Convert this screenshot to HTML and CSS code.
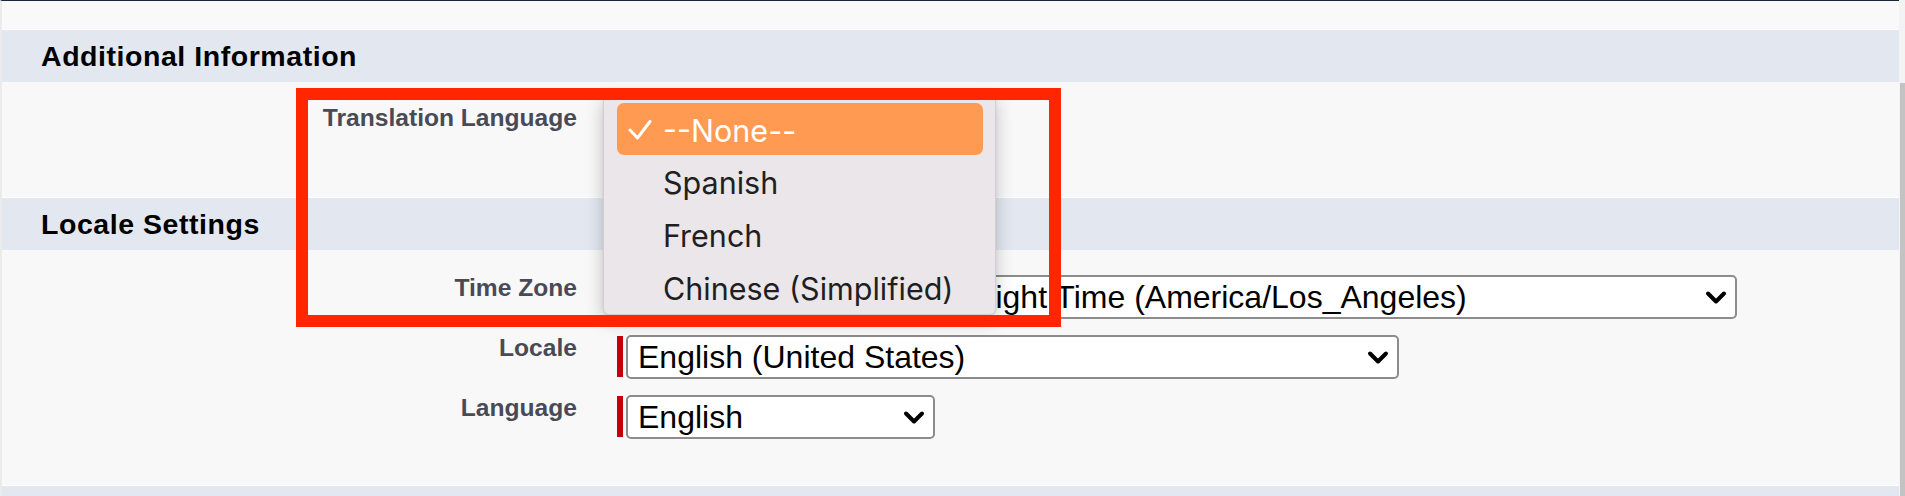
FILE: index.html
```html
<!DOCTYPE html>
<html lang="en">
<head>
<meta charset="utf-8">
<title>User Settings</title>
<link rel="stylesheet" href="styles.css">
</head>
<body>
<div class="page">
  <div class="frame">
    <div class="top-gap"></div>

    <section class="section">
      <h3 class="band">Additional Information</h3>
      <div class="rows rows-first">
        <div class="row">
          <div class="label">Translation Language</div>
          <div class="field"></div>
        </div>
      </div>
    </section>

    <section class="section">
      <h3 class="band">Locale Settings</h3>
      <div class="rows rows-locale">
        <div class="row">
          <div class="label">Time Zone</div>
          <div class="field">
            <span class="req"></span>
            <div class="select w-tz">
              <span class="value">(GMT-07:00) Pacific Daylight Time (America/Los_Angeles)</span>
              <svg class="chev" viewBox="0 0 22 15" aria-hidden="true"><path d="M3 3.5 L11 11.5 L19 3.5"/></svg>
            </div>
          </div>
        </div>
        <div class="row">
          <div class="label">Locale</div>
          <div class="field">
            <span class="req"></span>
            <div class="select w-locale">
              <span class="value">English (United States)</span>
              <svg class="chev" viewBox="0 0 22 15" aria-hidden="true"><path d="M3 3.5 L11 11.5 L19 3.5"/></svg>
            </div>
          </div>
        </div>
        <div class="row">
          <div class="label">Language</div>
          <div class="field">
            <span class="req"></span>
            <div class="select w-lang">
              <span class="value">English</span>
              <svg class="chev" viewBox="0 0 22 15" aria-hidden="true"><path d="M3 3.5 L11 11.5 L19 3.5"/></svg>
            </div>
          </div>
        </div>
      </div>
    </section>

    <div class="band band-next"></div>
  </div>
  <div class="edge">
    <div class="edge-top"></div>
    <div class="edge-track"></div>
  </div>
</div>

<div class="menu">
  <div class="item selected">
    <svg class="check" viewBox="0 0 24 20" aria-hidden="true"><path d="M2 10 L9.5 18 L22 1.5"/></svg>
    --None--
  </div>
  <div class="item">Spanish</div>
  <div class="item">French</div>
  <div class="item">Chinese (Simplified)</div>
</div>

<div class="callout"></div>
</body>
</html>
```

FILE: styles.css
```css
* { box-sizing: border-box; }

html, body {
  margin: 0;
  padding: 0;
  height: 100%;
}

body {
  background: #f8f8f8;
  font-family: "Liberation Sans", Arial, sans-serif;
  overflow: hidden;
}

.page {
  display: flex;
  height: 496px;
}

.frame {
  flex: 1;
  border-top: 1px solid #1b2738;
  border-left: 2px solid #ebebeb;
  background: #f8f8f8;
  display: flex;
  flex-direction: column;
}

.top-gap {
  height: 28px;
  background: #f9f9f9;
}

.band {
  margin: 0;
  height: 53px;
  border-top: 1px solid #fdfdfe;
  background: #e3e7f0;
  color: #000;
  font-size: 28.5px;
  letter-spacing: 0.55px;
  font-weight: bold;
  line-height: 52px;
  padding-left: 39px;
}

.band-next {
  flex: 1;
  margin-top: 0;
}

.rows {
  display: flex;
  flex-direction: column;
  gap: 16px;
}

.rows-first {
  height: 115px;
  padding-top: 23px;
}

.rows-locale {
  height: 235px;
  padding-top: 25px;
}

.row {
  display: grid;
  grid-template-columns: 575px 1fr;
  column-gap: 40px;
  align-items: start;
}

.label {
  text-align: right;
  color: #4a4a56;
  font-weight: bold;
  font-size: 24.6px;
  line-height: 26px;
}

.field {
  display: flex;
  gap: 3px;
  align-items: flex-start;
}

.req {
  width: 6px;
  height: 41px;
  margin-top: 1px;
  background: #c5000b;
  flex: none;
}

.select {
  height: 44px;
  border: 2px solid #8c8c8c;
  border-radius: 5px;
  background: #fff;
  display: flex;
  align-items: center;
  justify-content: space-between;
  padding: 0 8px 0 10px;
  color: #000;
  font-size: 32px;
  line-height: 40px;
  white-space: nowrap;
  overflow: hidden;
}

.select .value {
  padding-bottom: 1px;
}

.w-tz { width: 1111px; }
.w-locale { width: 773px; }
.w-lang { width: 309px; }

.chev {
  width: 22px;
  height: 15px;
  flex: none;
  fill: none;
  stroke: #000;
  stroke-width: 4;
  stroke-linecap: round;
  stroke-linejoin: round;
}

.edge {
  width: 6px;
  display: flex;
  flex-direction: column;
}

.edge-top {
  height: 83px;
  background: #f3f3f3;
}

.edge-track {
  flex: 1;
  border-left: 1px solid #f3f3f3;
  background: #c3c3c3;
}

/* open native dropdown list (overlay) */
.menu {
  position: absolute;
  left: 603px;
  top: 94px;
  width: 393px;
  height: 221px;
  padding: 8px 12px 0 13px;
  background: #eae6e9;
  border: 1px solid rgba(0, 0, 0, 0.10);
  border-radius: 6px;
  box-shadow: 0 6px 18px rgba(0, 0, 0, 0.22), 0 0 3px rgba(0, 0, 0, 0.08);
  font-family: Inter, "Liberation Sans", sans-serif;
  font-size: 30.5px;
  color: #1f1f1f;
}

.item {
  position: relative;
  height: 53px;
  line-height: 55px;
  padding-left: 46px;
  white-space: nowrap;
}

.item.selected {
  height: 52px;
  background: #fe9a51;
  border-radius: 7px;
  color: #fff;
}

.check {
  position: absolute;
  left: 11px;
  top: 17px;
  width: 24px;
  height: 20px;
  fill: none;
  stroke: #fff;
  stroke-width: 3;
  stroke-linecap: round;
  stroke-linejoin: round;
}

/* red annotation rectangle */
.callout {
  position: absolute;
  left: 296px;
  top: 88px;
  width: 765px;
  height: 239px;
  border: 12px solid #ff2600;
}
```
